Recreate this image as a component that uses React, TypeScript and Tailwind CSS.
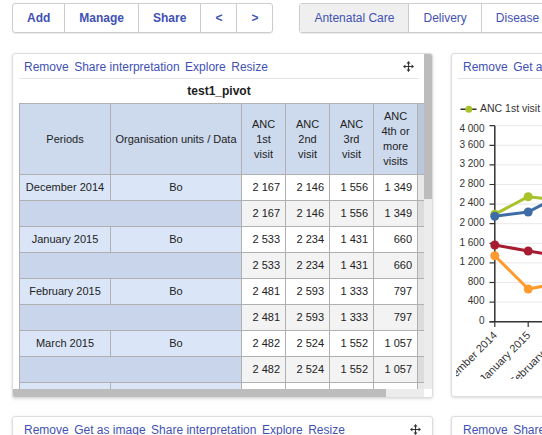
import React from "react";

const linkCls = "text-[#3f51b5] whitespace-nowrap cursor-pointer";

const MoveIcon = () => (
  <svg width="11" height="11" viewBox="0 0 12 12" className="shrink-0">
    <path d="M6 2v8M2 6h8" stroke="#333" strokeWidth="1.3" />
    <path
      d="M6 0L3.8 2.6h4.4zM6 12L3.8 9.4h4.4zM0 6l2.6-2.2v4.4zM12 6L9.4 3.8v4.4z"
      fill="#333"
    />
  </svg>
);

const PanelHeader: React.FC<{ links: string[] }> = ({ links }) => (
  <div className="flex items-center h-[25px] pt-[1px] px-[5px] border-b border-[#e5e5e5]">
    <div className="flex gap-[5.5px] text-[12px] min-w-0 overflow-hidden">
      {links.map((l) => (
        <a key={l} className={linkCls}>
          {l}
        </a>
      ))}
    </div>
    <div className="ml-auto pl-2">
      <MoveIcon />
    </div>
  </div>
);

const allLinks = ["Remove", "Get as image", "Share interpretation", "Explore", "Resize"];

const rows = [
  { period: "December 2014", v: ["2 167", "2 146", "1 556", "1 349"] },
  { period: "January 2015", v: ["2 533", "2 234", "1 431", "660"] },
  { period: "February 2015", v: ["2 481", "2 593", "1 333", "797"] },
  { period: "March 2015", v: ["2 482", "2 524", "1 552", "1 057"] },
];

const cell = "border border-[#b0b0b0] text-[11px] leading-[15px] text-[#222] h-[26px] py-0";
const head = `${cell} h-[71px] bg-[#cddaee] font-normal`;

const PivotTable = () => (
  <table className="border-collapse table-fixed w-[442px]">
    <colgroup>
      <col className="w-[91px]" />
      <col className="w-[131px]" />
      <col className="w-[44px]" />
      <col className="w-[44px]" />
      <col className="w-[44px]" />
      <col className="w-[44px]" />
      <col className="w-[44px]" />
    </colgroup>
    <thead>
      <tr>
        <th className={head}>Periods</th>
        <th className={head}>Organisation units / Data</th>
        <th className={head}>
          ANC
          <br />
          1st
          <br />
          visit
        </th>
        <th className={head}>
          ANC
          <br />
          2nd
          <br />
          visit
        </th>
        <th className={head}>
          ANC
          <br />
          3rd
          <br />
          visit
        </th>
        <th className={head}>
          ANC
          <br />
          4th or
          <br />
          more
          <br />
          visits
        </th>
        <th className={`${cell} h-[71px] bg-[#b9c7dc] font-normal`}></th>
      </tr>
    </thead>
    <tbody>
      {rows.map((r) => (
        <React.Fragment key={r.period}>
          <tr>
            <td className={`${cell} bg-[#dae6f8] text-center`}>{r.period}</td>
            <td className={`${cell} bg-[#dae6f8] text-center`}>Bo</td>
            {r.v.map((n, i) => (
              <td key={i} className={`${cell} bg-white text-right pr-[5px]`}>
                {n}
              </td>
            ))}
            <td className={`${cell} bg-[#e9e9e9]`}></td>
          </tr>
          <tr>
            <td colSpan={2} className={`${cell} bg-[#c9d5ea]`}></td>
            {r.v.map((n, i) => (
              <td key={i} className={`${cell} bg-[#f3f3f3] text-right pr-[5px]`}>
                {n}
              </td>
            ))}
            <td className={`${cell} bg-[#dcdcdc]`}></td>
          </tr>
        </React.Fragment>
      ))}
      <tr>
        <td className={`${cell} bg-[#dae6f8]`}></td>
        <td className={`${cell} bg-[#dae6f8]`}></td>
        <td className={`${cell} bg-white`}></td>
        <td className={`${cell} bg-white`}></td>
        <td className={`${cell} bg-white`}></td>
        <td className={`${cell} bg-white`}></td>
        <td className={`${cell} bg-[#e9e9e9]`}></td>
      </tr>
    </tbody>
  </table>
);

const yTicks: [string, number, number][] = [
  ["4 000", 125.7, 129.5],
  ["3 600", 145.3, 145],
  ["3 200", 164.9, 164.6],
  ["2 800", 184.5, 184.2],
  ["2 400", 204.1, 203.8],
  ["2 000", 223.7, 223.4],
  ["1 600", 243.3, 243],
  ["1 200", 262.9, 262.6],
  ["800", 282.5, 282.2],
  ["400", 302.1, 301.8],
  ["0", 321.7, 321.5],
];

const xs = [495.3, 528.7, 562.1];
const series = [
  { color: "#a8c22c", ys: [214.3, 196.7, 200.5] },
  { color: "#3d6ca7", ys: [216.3, 212, 194.5] },
  { color: "#a71b31", ys: [245, 251, 256.3] },
  { color: "#ff9a2e", ys: [255.7, 289, 282.6] },
];
const months = ["December 2014", "January 2015", "February 2015"];

const Chart = () => (
  <svg width="410" height="300" className="block">
    <g transform="translate(-456.5 -79)" fontFamily="'Liberation Sans', Arial, sans-serif">
      <line x1="461" y1="109.3" x2="477" y2="109.3" stroke="#333" strokeWidth="1.5" />
      <circle cx="469.3" cy="109.3" r="3.5" fill="#a8c22c" />
      <text x="480.5" y="109.3" fontSize="10.5" fill="#333" dominantBaseline="middle">
        ANC 1st visit
      </text>
      {yTicks.map(([label, ty, ly]) => (
        <g key={label}>
          <line x1="495.3" y1={ty} x2="900" y2={ty} stroke="#e8e8e8" strokeWidth="1" />
          <line x1="490" y1={ty} x2="495.3" y2={ty} stroke="#333" strokeWidth="1.2" />
          <text x="485" y={ly} fontSize="10" fill="#333" textAnchor="end" dominantBaseline="middle">
            {label}
          </text>
        </g>
      ))}
      <line x1="495.3" y1="125.7" x2="495.3" y2="322" stroke="#333" strokeWidth="1.5" />
      <line x1="490" y1="321.7" x2="900" y2="321.7" stroke="#333" strokeWidth="1.5" />
      {xs.map((x, i) => (
        <g key={x}>
          <line x1={x} y1="321.7" x2={x} y2="327" stroke="#333" strokeWidth="1.2" />
          <text
            x={x + 3}
            y="336"
            fontSize="11"
            fill="#333"
            textAnchor="end"
            transform={`rotate(-45 ${x + 3} 336)`}
          >
            {months[i]}
          </text>
        </g>
      ))}
      {series.map((s) => (
        <g key={s.color}>
          <polyline
            points={xs.map((x, i) => `${x},${s.ys[i]}`).join(" ")}
            fill="none"
            stroke={s.color}
            strokeWidth="3"
            strokeLinejoin="round"
          />
          {xs.map((x, i) => (
            <circle key={i} cx={x} cy={s.ys[i]} r="4.5" fill={s.color} />
          ))}
        </g>
      ))}
    </g>
  </svg>
);

const panelCls =
  "w-[421px] shrink-0 border border-[#ddd] rounded-[3px] shadow-[0_1px_3px_rgba(0,0,0,0.15)] bg-white overflow-hidden";

export default function App() {
  return (
    <div className="w-[542px] h-[435px] overflow-hidden bg-white pt-[3px] pl-[12px] font-['Liberation_Sans',Arial,sans-serif]">
      {/* toolbar */}
      <div className="flex items-center whitespace-nowrap">
        <div className="flex h-[30px] border border-[#ccc] rounded-[3px] shadow-[0_1px_1px_rgba(0,0,0,0.08)] text-[12px] font-bold text-[#3f51b5]">
          <button className="px-[14px]">Add</button>
          <button className="px-[14px] border-l border-[#ccc]">Manage</button>
          <button className="px-[14px] border-l border-[#ccc]">Share</button>
          <button className="px-[14px] border-l border-[#ccc]">&lt;</button>
          <button className="px-[14px] border-l border-[#ccc]">&gt;</button>
        </div>
        <div className="flex h-[30px] ml-[26px] border border-[#ccc] rounded-[3px] shadow-[0_1px_1px_rgba(0,0,0,0.08)] text-[12px] text-[#3f51b5] shrink-0">
          <button className="px-[14px] bg-[#efefef]">Antenatal Care</button>
          <button className="px-[14px] border-l border-[#ccc]">Delivery</button>
          <button className="px-[14px] border-l border-[#ccc]">Disease Surveillance</button>
        </div>
      </div>

      {/* dashboard items */}
      <div className="flex gap-[18px] mt-[20px]">
        <div className={`${panelCls} h-[345px] grid grid-cols-[1fr_8px] grid-rows-[1fr_8px]`}>
          <div className="overflow-hidden pl-[6px] pr-[5px]">
            <PanelHeader links={["Remove", "Share interpretation", "Explore", "Resize"]} />
            <div className="h-[24px] flex items-center justify-center font-bold text-[12px] text-[#222]">
              test1_pivot
            </div>
            <PivotTable />
          </div>
          <div className="flex flex-col">
            <div className="h-[145px] bg-[#bcbcbc]" />
            <div className="flex-1 bg-[#ececec]" />
          </div>
          <div className="flex">
            <div className="w-[373px] bg-[#bcbcbc]" />
            <div className="flex-1 bg-[#ececec]" />
          </div>
          <div className="bg-white" />
        </div>
        <div className={`${panelCls} h-[344px]`}>
          <div className="px-[6px]">
            <PanelHeader links={allLinks} />
          </div>
          <div className="pl-[4px]">
            <Chart />
          </div>
        </div>
      </div>

      <div className="flex gap-[18px] mt-[18px]">
        <div className={`${panelCls} h-[200px]`}>
          <div className="px-[6px]">
            <PanelHeader links={allLinks} />
          </div>
        </div>
        <div className={`${panelCls} h-[200px]`}>
          <div className="px-[6px]">
            <PanelHeader links={["Remove", "Share interpretation", "Explore", "Resize"]} />
          </div>
        </div>
      </div>
    </div>
  );
}
